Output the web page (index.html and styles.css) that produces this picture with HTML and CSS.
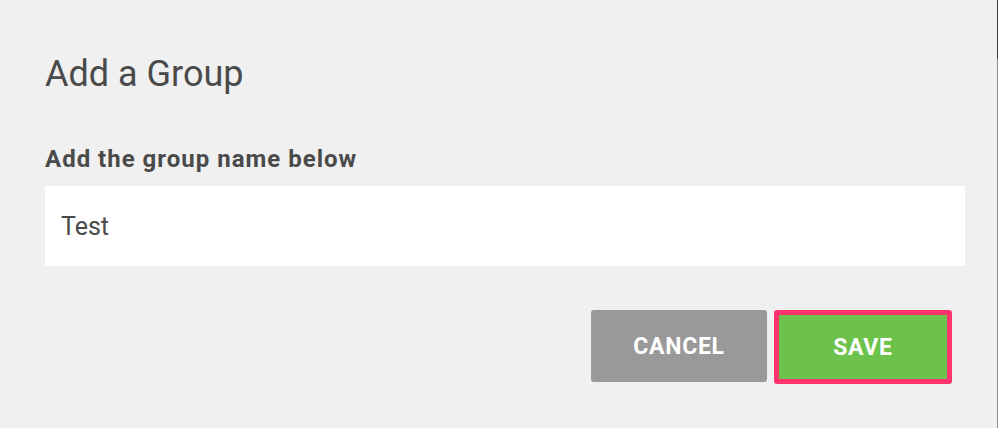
FILE: index.html
```html
<html lang="en">
<head>
    <meta charset="UTF-8">
    <meta name="viewport" content="width=device-width, initial-scale=1.0">
    <title>Add a Group</title>
    <link rel="stylesheet" href="styles.css">
</head>
<body>
    <div class="dialog">
        <h1 class="dialog-title">Add a Group</h1>
        <label class="field-label" for="groupName">Add the group name below</label>
        <input class="field-input" id="groupName" type="text" value="Test">
        <div class="actions">
            <button class="btn btn-cancel">CANCEL</button>
            <button class="btn btn-save">SAVE</button>
        </div>
    </div>
</body>
</html>
```

FILE: styles.css
```css
body {
    margin: 0;
    background-color: #f0f0f0;
    font-family: Roboto, "Liberation Sans", Arial, sans-serif;
    color: #4a4a4a;
}
.dialog {
    box-sizing: border-box;
    width: 998px;
    height: 428px;
    padding: 53px 32px 0 45px;
    display: flex;
    flex-direction: column;
    border-right: 1px solid #8c8c8c;
    border-image: linear-gradient(#3c3c3c 60px, #8c8c8c 60px) 1;
}
.dialog-title {
    margin: 0;
    font-size: 36px;
    font-weight: 400;
    line-height: 42px;
}
.field-label {
    margin-top: 50px;
    font-size: 24px;
    font-weight: 700;
    line-height: 28px;
    letter-spacing: 1px;
}
.field-input {
    box-sizing: border-box;
    margin-top: 13px;
    width: 920px;
    height: 80px;
    padding: 0 16px;
    border: none;
    outline: none;
    background-color: #fff;
    font-family: inherit;
    font-size: 25px;
    color: #4a4a4a;
}
.actions {
    display: flex;
    justify-content: flex-end;
    align-items: flex-start;
    gap: 7px;
    margin-top: 44px;
    width: 920px;
    padding-right: 13px;
    box-sizing: border-box;
}
.btn {
    box-sizing: border-box;
    border: none;
    border-radius: 3px;
    color: #fff;
    font-family: inherit;
    font-size: 23px;
    font-weight: 700;
    letter-spacing: 0.7px;
    cursor: pointer;
}
.btn-cancel {
    width: 176px;
    height: 72px;
    background-color: #999;
}
.btn-save {
    width: 178px;
    height: 74px;
    background-color: #6cc24a;
    border: 5px solid #ff336e;
}
```
